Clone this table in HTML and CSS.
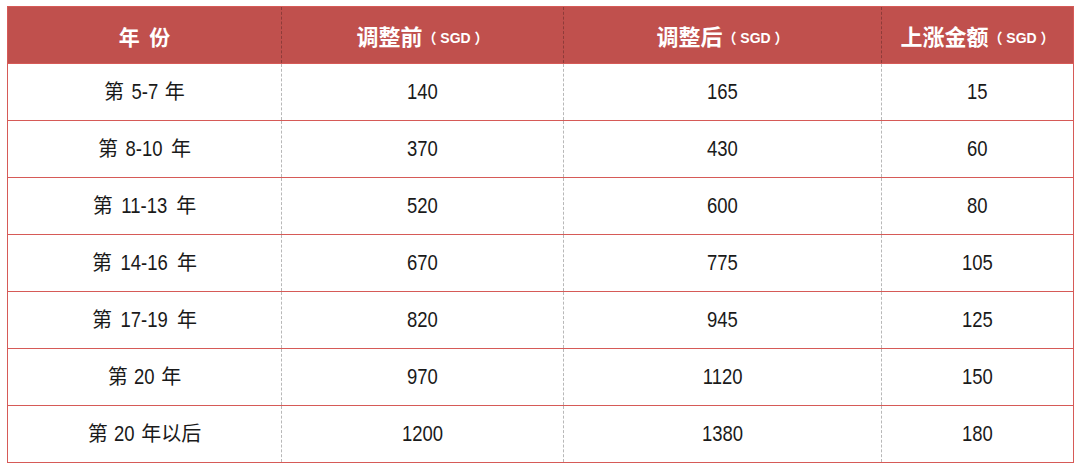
FILE: index.html
```html
<!DOCTYPE html>
<html lang="zh">
<head>
<meta charset="utf-8">
<link rel="stylesheet" href="styles.css">
</head>
<body>
<div class="wrap">
<table class="fees">
  <colgroup>
    <col class="c1"><col class="c2"><col class="c3"><col class="c4">
  </colgroup>
  <thead>
    <tr>
      <th><span class="yr">年&nbsp;&nbsp;份</span></th>
      <th>调整前<span class="unit">（ SGD ）</span></th>
      <th>调整后<span class="unit">（ SGD ）</span></th>
      <th>上涨金额<span class="unit">（ SGD ）</span></th>
    </tr>
  </thead>
  <tbody>
    <tr><td>第 <span class="num">5-7</span> 年</td><td><span class="num">140</span></td><td><span class="num">165</span></td><td><span class="num">15</span></td></tr>
    <tr><td>第 <span class="num">8-10</span> 年</td><td><span class="num">370</span></td><td><span class="num">430</span></td><td><span class="num">60</span></td></tr>
    <tr><td>第 <span class="num">11-13</span> 年</td><td><span class="num">520</span></td><td><span class="num">600</span></td><td><span class="num">80</span></td></tr>
    <tr><td>第 <span class="num">14-16</span> 年</td><td><span class="num">670</span></td><td><span class="num">775</span></td><td><span class="num">105</span></td></tr>
    <tr><td>第 <span class="num">17-19</span> 年</td><td><span class="num">820</span></td><td><span class="num">945</span></td><td><span class="num">125</span></td></tr>
    <tr><td>第 <span class="num">20</span> 年</td><td><span class="num">970</span></td><td><span class="num">1120</span></td><td><span class="num">150</span></td></tr>
    <tr><td>第 <span class="num">20</span> 年以后</td><td><span class="num">1200</span></td><td><span class="num">1380</span></td><td><span class="num">180</span></td></tr>
  </tbody>
</table>
</div>
</body>
</html>
```
FILE: styles.css
```css
html, body {
  margin: 0;
  padding: 0;
  background: #ffffff;
}
.wrap {
  padding: 6px 7px 0 7px;
}
.fees {
  width: 1066px;
  border-collapse: collapse;
  table-layout: fixed;
  border: 1px solid #d65a57;
  font-family: "Noto Sans CJK SC", sans-serif;
}
.c1 { width: 274px; }
.c2 { width: 282px; }
.c3 { width: 318px; }
.c4 { width: 192px; }
.fees th {
  height: 56px;
  padding: 0;
  background: #c0504d;
  color: #ffffff;
  font-weight: 700;
  font-size: 22px;
  line-height: 1;
  text-align: center;
  vertical-align: middle;
  border-left: 1px dashed #8e3b39;
}
.fees th:first-child { border-left: none; }
.yr {
  font-size: 21px;
}
.unit {
  font-size: 14px;
  font-weight: 700;
  font-family: "Liberation Sans", "Noto Sans CJK SC", sans-serif;
  vertical-align: 2px;
}
.fees td {
  height: 56px;
  padding: 0;
  text-align: center;
  vertical-align: middle;
  font-size: 20px;
  line-height: 1;
  color: #1a1a1a;
  border-top: 1px solid #d65a57;
  border-left: 1px dashed #b8b8b8;
}
.fees td:first-child { border-left: 1px solid #d65a57; }
.num {
  display: inline-block;
  font-family: "Liberation Sans", sans-serif;
  font-size: 22px;
  transform: scaleX(0.84);
}
```
